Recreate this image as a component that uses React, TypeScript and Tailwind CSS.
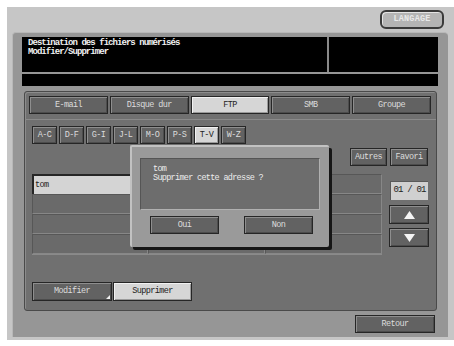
import React from 'react';

const mono = "font-['Liberation_Mono','DejaVu_Sans_Mono',monospace]";

// dark bevelled key used on the panel
const key =
  'border border-[#262626] bg-[#626262] shadow-[inset_1px_1px_0_#8e8e8e,inset_-1px_-1px_0_#4c4c4c] text-[#dcdcdc] flex items-center justify-center text-[8.5px] tracking-[-0.6px]';
// pressed / selected key
const keyOn =
  'border border-[#262626] bg-[#d6d6d6] shadow-[inset_1px_1px_0_#f2f2f2,inset_-1px_-1px_0_#9a9a9a] text-[#222] flex items-center justify-center text-[8.5px] tracking-[-0.6px]';

function Arrow({ up }: { up?: boolean }) {
  return (
    <svg width="11" height="8" viewBox="0 0 11 8">
      <polygon points={up ? '5.5,0 11,8 0,8' : '0,0 11,0 5.5,8'} fill="#f4f4f4" />
    </svg>
  );
}

export default function App() {
  const tabs = ['E-mail', 'Disque dur', 'FTP', 'SMB', 'Groupe'];
  const letters = ['A-C', 'D-F', 'G-I', 'J-L', 'M-O', 'P-S', 'T-V', 'W-Z'];

  return (
    <div className={`relative w-[454px] h-[346px] bg-white overflow-hidden ${mono}`}>
      {/* outer bezel */}
      <div className="ml-[7px] mt-[7px] w-[447px] h-[333px] bg-[#c6c6c6] pt-[3px]">
        <div className="flex justify-end pr-[10px]">
          <div className="w-[64px] h-[19px] rounded-[6px] border-2 border-[#3a3a3a] bg-[#b4b4b4] shadow-[inset_1px_1px_0_#e4e4e4] flex items-center justify-center text-[8.5px] tracking-[0.2px] text-[#e8e8e8] font-bold">
            LANGAGE
          </div>
        </div>

        {/* frame */}
        <div className="mt-[3px] ml-[5px] w-[436px] h-[305px] bg-[#969696] rounded-t-[4px] border-t border-l border-[#b8b8b8] pt-[4px] pl-[9px]">
          {/* black title area */}
          <div className="w-[416px] h-[35px] bg-black flex">
            <div className="w-[305px] pl-[6px] pt-[2px] text-[9px] leading-[9px] tracking-[-0.95px] font-bold text-[#f0f0f0]">
              <div>Destination des fichiers numérisés</div>
              <div>Modifier/Supprimer</div>
            </div>
            <div className="w-[2px] bg-[#8a8a8a]" />
            <div className="flex-1" />
          </div>
          <div className="mt-[2px] w-[416px] h-[12px] bg-black" />

          {/* main panel */}
          <div className="mt-[5px] ml-[2px] w-[413px] h-[220px] bg-[#707070] rounded-[3px] border border-[#4a4a4a] shadow-[inset_1px_1px_0_#8c8c8c]">
            <div className="pt-[4px] pl-[4px]">
              <div className="grid grid-cols-5 gap-x-[2px] w-[402px] h-[18px]">
                {tabs.map((t) => (
                  <div key={t} className={t === 'FTP' ? keyOn : key}>
                    {t}
                  </div>
                ))}
              </div>
            </div>
            <div className="mt-[5px] h-[1px] bg-[#8a8a8a]" />

            {/* letter index */}
            <div className="mt-[6px] ml-[7px] flex gap-x-[2px]">
              {letters.map((l) => (
                <div key={l} className={`w-[25px] h-[18px] ${l === 'T-V' ? keyOn : key}`}>
                  {l}
                </div>
              ))}
            </div>

            <div className="mt-[4px] ml-[325px] flex gap-x-[3px]">
              <div className={`w-[37px] h-[18px] ${key}`}>Autres</div>
              <div className={`w-[38px] h-[18px] ${key}`}>Favori</div>
            </div>

            <div className="mt-[8px] ml-[7px] flex">
              {/* address list */}
              <div className="w-[350px] grid grid-cols-[116px_117px_117px] grid-rows-[repeat(4,20px)] border-b border-[#8a8a8a]">
                {Array.from({ length: 12 }).map((_, i) =>
                  i === 0 ? (
                    <div
                      key={i}
                      className="bg-[#d4d4d4] border-t-2 border-l-2 border-[#262626] text-[8.5px] tracking-[-0.6px] text-[#222] pl-[1px] flex items-center"
                    >
                      tom
                    </div>
                  ) : (
                    <div
                      key={i}
                      className="bg-[#6a6a6a] border-t border-l border-[#575757] border-b border-r border-b-[#878787] border-r-[#878787]"
                    />
                  )
                )}
              </div>

              {/* paging */}
              <div className="ml-[7px] w-[40px] flex flex-col">
                <div className="mt-[7px] ml-[1px] w-[38px] h-[19px] bg-[#d0d0d0] border-t border-l border-[#5a5a5a] flex items-center justify-center text-[9px] tracking-[-0.8px] text-[#222]">
                  01 / 01
                </div>
                <div className={`mt-[5px] w-[40px] h-[19px] ${key}`}>
                  <Arrow up />
                </div>
                <div className={`mt-[4px] w-[40px] h-[19px] ${key}`}>
                  <Arrow />
                </div>
              </div>
            </div>

            {/* bottom keys */}
            <div className="mt-[27px] ml-[7px] flex">
              <div className={`relative w-[80px] h-[19px] ${key}`}>
                Modifier
                <svg className="absolute right-[1px] bottom-[1px]" width="4" height="4" viewBox="0 0 4 4">
                  <polygon points="4,0 4,4 0,4" fill="#f0f0f0" />
                </svg>
              </div>
              <div className={`ml-[1px] w-[79px] h-[19px] ${keyOn}`}>Supprimer</div>
            </div>
          </div>

          <div className="mt-[4px] ml-[333px] flex">
            <div className={`w-[80px] h-[18px] ${key}`}>Retour</div>
          </div>
        </div>
      </div>

      {/* confirmation dialog */}
      <div className="absolute left-[130px] top-[145px] w-[199px] h-[102px] bg-[#9a9a9a] rounded-[2px] border-t-2 border-l-2 border-[#c2c2c2] shadow-[3px_3px_0_#161616] pt-[11px] pl-[8px]">
        <div className="w-[180px] h-[52px] bg-[#6d6d6d] border-t border-l border-[#555] border-b border-r border-b-[#b0b0b0] border-r-[#b0b0b0] pl-[12px] pt-[6px] text-[8.5px] leading-[9px] tracking-[-0.7px] text-[#ececec]">
          <div>tom</div>
          <div>Supprimer cette adresse ?</div>
        </div>
        <div className="mt-[6px] ml-[10px] flex gap-x-[25px]">
          <div className={`w-[69px] h-[18px] ${key}`}>Oui</div>
          <div className={`w-[69px] h-[18px] ${key}`}>Non</div>
        </div>
      </div>
    </div>
  );
}
